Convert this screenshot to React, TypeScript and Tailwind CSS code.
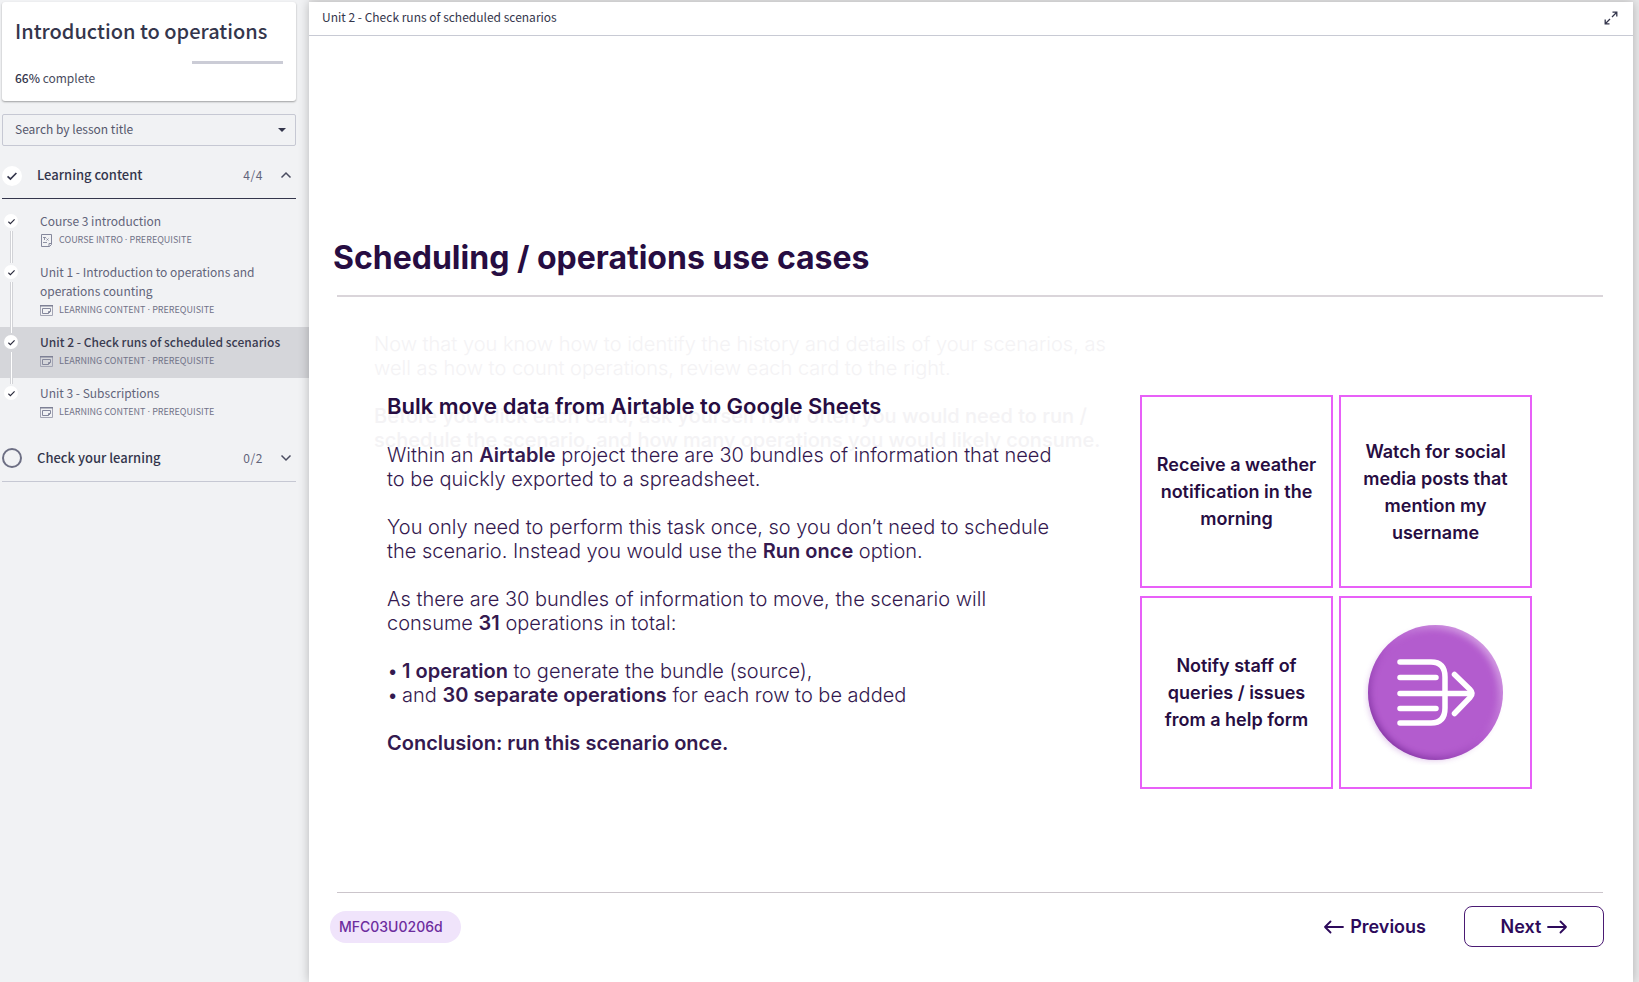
import type { ReactNode } from "react";

type Lesson = { title: string; kind: string; icon: "page" | "window"; active?: boolean };

const lessons: Lesson[] = [
  { title: "Course 3 introduction", kind: "COURSE INTRO", icon: "page" },
  { title: "Unit 1 - Introduction to operations and operations counting", kind: "LEARNING CONTENT", icon: "window" },
  { title: "Unit 2 - Check runs of scheduled scenarios", kind: "LEARNING CONTENT", icon: "window", active: true },
  { title: "Unit 3 - Subscriptions", kind: "LEARNING CONTENT", icon: "window" },
];

function Check({ className }: { className: string }) {
  return (
    <svg viewBox="0 0 10 10" className={className} fill="none" stroke="currentColor" strokeWidth="1.700" aria-hidden="true">
      <path d="M0.500 5.400 3.400 8 9.400 2" />
    </svg>
  );
}

function Chevron({ up }: { up?: boolean }) {
  return (
    <svg viewBox="0 0 12 8" className="h-2 w-3" fill="none" stroke="#4a4c60" strokeWidth="1.500" aria-hidden="true">
      <path d={up ? "M1.500 6.500 6 2l4.500 4.500" : "M1.500 1.500 6 6l4.500-4.500"} />
    </svg>
  );
}

function KindIcon({ icon }: { icon: Lesson["icon"] }) {
  if (icon === "page") {
    return (
      <svg viewBox="0 0 13 13" className="h-[13px] w-[13px]" fill="none" stroke="#85889c" aria-hidden="true">
        <path d="M1.500.5h10v10l-2 2h-8zM11.500 9.500H9v3" />
        <path d="M3 3.500h3M4.500 3.500v2.500M6.500 4.500l2 2M8.500 4.500l-2 2M3 8.500h4" strokeWidth="0.900" />
      </svg>
    );
  }
  return (
    <svg viewBox="0 0 13 11" className="h-[11px] w-[13px]" fill="none" stroke="#a3a5b4" aria-hidden="true">
      <path d="M.5.5h12v10H.5z" />
      <path d="M0 .75h13" stroke="#7d8095" strokeWidth="1.500" />
      <path d="M2.500 3.500h8v3l-2 2h-6zM10.500 6.500h-2v2" stroke="#85889c" />
    </svg>
  );
}

function LessonRow({ lesson, last }: { lesson: Lesson; last: boolean }) {
  return (
    <li className={lesson.active ? "bg-[#d5d6da]" : ""}>
      <a href="#lesson" aria-current={lesson.active ? "page" : undefined} className="relative flex pr-6 pl-1">
        <span className="relative z-10 mt-2 grid size-[14px] shrink-0 place-items-center rounded-full bg-white text-[#2b2c3d]">
          <Check className="size-[7px]" />
        </span>
        {!last && <span className="absolute top-[25px] -bottom-[6px] left-[10px] z-10 w-[3px] border-x border-[#d2d3d7] bg-white" />}
        <span className="ml-[22px] flex flex-col pt-[5px] pb-2">
          <span className={lesson.active ? "text-[12px] leading-[19px] font-medium text-[#3a3b50]" : "text-[12px] leading-[19px] text-[#62647a]"}>
            {lesson.title}
          </span>
          <span className="mt-px flex h-[18px] items-center gap-[6px] text-[9px] leading-[18px] text-[#717388]">
            <KindIcon icon={lesson.icon} />
            <span>
              {lesson.kind} <span className="font-[Inter,sans-serif]">·</span> PREREQUISITE
            </span>
          </span>
        </span>
      </a>
    </li>
  );
}

function Sidebar() {
  return (
    <aside className="w-[309px] shrink-0 bg-[#f1f2f4] pt-[2px] text-[#34364c]">
      <section className="mr-[13px] ml-[2px] rounded-[3px] bg-white px-[13px] pt-[13px] pb-[13px] shadow-[0_1px_2px_rgba(0,0,0,0.35)]">
        <h1 className="text-[20px] leading-8 font-medium whitespace-nowrap">Introduction to operations</h1>
        <div role="progressbar" aria-valuenow={66} aria-label="Course progress" className="mt-[14px] flex h-[3px] justify-end">
          <span className="w-[34%] bg-[#cbccd6]" />
        </div>
        <p className="mt-1 text-[12px] leading-5 text-[#4a4c60]">
          <b className="font-medium text-[#34364c]">66%</b> complete
        </p>
      </section>

      <div className="relative mt-[13px] mr-[13px] ml-[2px]">
        <select
          aria-label="Search by lesson title"
          className="h-8 w-full appearance-none rounded-[2px] border border-[#c6c8d3] bg-transparent px-3 pb-[2px] text-[12px] text-[#55576c]"
        >
          <option>Search by lesson title</option>
          {lessons.map((l) => (
            <option key={l.title}>{l.title}</option>
          ))}
        </select>
        <svg viewBox="0 0 8 4" className="pointer-events-none absolute top-[14px] right-[10px] h-1 w-2" aria-hidden="true">
          <path d="M0 0h8L4 4z" fill="#34364c" />
        </svg>
      </div>

      <button type="button" className="mr-[13px] ml-[2px] flex h-[53px] w-[294px] items-center border-b border-[#34364c] pt-[7px] text-left">
        <span className="grid size-5 place-items-center rounded-full bg-white">
          <Check className="size-[10px]" />
        </span>
        <span className="ml-[15px] grow pb-[2px] text-[13px] leading-5 font-medium">Learning content</span>
        <span className="mr-[17px] pb-[2px] text-[12px] leading-5 tracking-wider text-[#62647a]">4/4</span>
        <span className="mr-1 pb-[2px]">
          <Chevron up />
        </span>
      </button>

      <ol className="mt-[7px]">
        {lessons.map((l, i) => (
          <LessonRow key={l.title} lesson={l} last={i === lessons.length - 1} />
        ))}
      </ol>

      <button type="button" className="mt-[7px] mr-[13px] ml-[2px] flex h-[46px] w-[294px] items-center border-b border-[#c6c8d3] pb-[2px] text-left">
        <span className="size-5 rounded-full border-2 border-[#6d6f84]" />
        <span className="ml-[15px] grow text-[13px] leading-5 font-medium">Check your learning</span>
        <span className="mr-[17px] text-[12px] leading-5 tracking-wider text-[#62647a]">0/2</span>
        <span className="mr-1">
          <Chevron />
        </span>
      </button>
    </aside>
  );
}

function Card({ children }: { children: ReactNode }) {
  return (
    <button
      type="button"
      className="flex aspect-square items-center justify-center border-2 border-[#e860f8] px-2 text-center text-[18px] leading-[27px] font-semibold text-[#270d42]"
    >
      {children}
    </button>
  );
}

function MergeBadge() {
  return (
    <svg viewBox="0 0 145 145" className="size-[145px]" role="img" aria-label="Merge">
      <defs>
        <clipPath id="disc">
          <circle cx="72.500" cy="72.500" r="67.500" />
        </clipPath>
        <linearGradient id="rim" x1="0.850" y1="0.150" x2="0.150" y2="0.850">
          <stop offset="0" stopColor="#d29ae2" />
          <stop offset="0.500" stopColor="#b35bce" />
          <stop offset="1" stopColor="#8435a4" />
        </linearGradient>
        <filter id="soft" x="-20%" y="-20%" width="140%" height="140%">
          <feGaussianBlur stdDeviation="3" />
        </filter>
      </defs>
      <circle cx="70" cy="75" r="65" fill="#a65bc4" opacity="0.400" filter="url(#soft)" />
      <circle cx="72.500" cy="72.500" r="67.500" fill="url(#rim)" />
      <g clipPath="url(#disc)">
        <circle cx="71.500" cy="73" r="63.500" fill="#b35bce" filter="url(#soft)" />
      </g>
      <g fill="none" stroke="#fff" strokeWidth="5.500" strokeLinecap="round" strokeLinejoin="round">
        <path d="M37 42h31q14 0 14 15v31q0 15-14 15H37" />
        <path d="M37 57.500h36M37 73.500h71M37 88.500h36" />
        <path d="M91.500 54.500 107 69.500q4 4 0 8L91.500 93.500" />
      </g>
    </svg>
  );
}

function Arrow({ left }: { left?: boolean }) {
  return (
    <svg viewBox="0 0 20 14" className="h-[14px] w-5" fill="none" stroke="currentColor" strokeWidth="1.800" strokeLinecap="round" strokeLinejoin="round" aria-hidden="true">
      <path d={left ? "M19 7H1M6.500 1.500 1 7l5.500 5.500" : "M1 7h18M13.500 1.500 19 7l-5.500 5.500"} />
    </svg>
  );
}

export default function App() {
  return (
    <div className="flex min-h-screen bg-[#e9e9ea] font-['Noto_Sans_CJK_SC',sans-serif]">
      <Sidebar />
      <main className="z-10 mt-[2px] mr-[6px] flex grow flex-col bg-white shadow-[0_0_10px_rgba(0,0,0,0.25)]">
        <header className="flex h-[34px] items-center justify-between border-b border-[#c8cad4] pr-[15px] pl-[13px] text-[12px] text-[#34364c]">
          <span className="pb-[3px] leading-5">Unit 2 - Check runs of scheduled scenarios</span>
          <button type="button" aria-label="Expand" className="mb-[2px]">
            <svg viewBox="0 0 14 14" className="size-[14px]" fill="none" stroke="#34364c" strokeWidth="1.300" aria-hidden="true">
              <path d="M8 6l4.500-4.500M8.500 1.200h4.300v4.300M6 8l-4.500 4.500M1.200 8.500v4.300h4.300" />
            </svg>
          </button>
        </header>

        <article className="flex grow flex-col pr-[30px] pl-[28px] font-[Inter,sans-serif] text-[#270d42]">
          <h2 className="mt-[202px] -ml-1 text-[32px] leading-10 font-bold">Scheduling / operations use cases</h2>
          <div className="mt-[17px] h-[2px] bg-[#dad5da]" />

          <div className="flex grow items-start pt-[35px] pr-[71px] pl-[37px]">
            <div className="grid grow text-[20px] leading-6 font-light">
              <div className="col-start-1 row-start-1 whitespace-nowrap text-[#f4f3f5]">
                <p>
                  Now that you know how to identify the history and details of your scenarios, as
                  <br />
                  well as how to count operations, review each card to the right.
                </p>
                <p className="mt-6 font-medium">
                  Before you click each card, ask yourself how often you would need to run /
                  <br />
                  schedule the scenario, and how many operations you would likely consume.
                </p>
              </div>
              <div className="z-10 col-start-1 row-start-1 flex flex-col gap-6 pt-[61px] pl-[13px] text-[#34194f]">
                <h3 className="text-[22px] leading-[26px] font-semibold text-[#270d42]">Bulk move data from Airtable to Google Sheets</h3>
                <p>
                  Within an <b className="font-semibold">Airtable</b> project there are 30 bundles of information that need
                  <br />
                  to be quickly exported to a spreadsheet.
                </p>
                <p>
                  You only need to perform this task once, so you don’t need to schedule
                  <br />
                  the scenario. Instead you would use the <b className="font-semibold">Run once</b> option.
                </p>
                <p>
                  As there are 30 bundles of information to move, the scenario will
                  <br />
                  consume <b className="font-semibold">31</b> operations in total:
                </p>
                <ul>
                  <li className="flex gap-2">
                    <span className="w-[7px]">•</span>
                    <span>
                      <b className="font-semibold">1 operation</b> to generate the bundle (source),
                    </span>
                  </li>
                  <li className="flex gap-2">
                    <span className="w-[7px]">•</span>
                    <span>
                      and <b className="font-semibold">30 separate operations</b> for each row to be added
                    </span>
                  </li>
                </ul>
                <p className="font-semibold">Conclusion: run this scenario once.</p>
              </div>
            </div>

            <div className="mt-[63px] grid w-[392px] shrink-0 grid-cols-2 gap-x-[6px] gap-y-2">
              <Card>Receive a weather notification in the morning</Card>
              <Card>Watch for social media posts that mention my username</Card>
              <Card>Notify staff of queries / issues from a help form</Card>
              <Card>
                <MergeBadge />
              </Card>
            </div>
          </div>

          <footer className="pb-[35px]">
            <div className="h-px bg-[#cbc5cb]" />
            <div className="-mr-px -ml-[7px] mt-[13px] flex items-center">
              <span className="rounded-full bg-[#f0e4fb] pr-[18px] pl-[9px] text-[14px] leading-8 font-medium text-[#6d2d9e]">MFC03U0206d</span>
              <span className="grow" />
              <button type="button" className="flex items-center gap-[6px] text-[18px] font-semibold text-[#2d0a5b]">
                <Arrow left />
                Previous
              </button>
              <button
                type="button"
                className="ml-[38px] flex h-[41px] w-[140px] items-center justify-center gap-[6px] rounded-lg border border-[#4a1a73] text-[18px] font-semibold text-[#2d0a5b]"
              >
                Next
                <Arrow />
              </button>
            </div>
          </footer>
        </article>
      </main>
    </div>
  );
}
